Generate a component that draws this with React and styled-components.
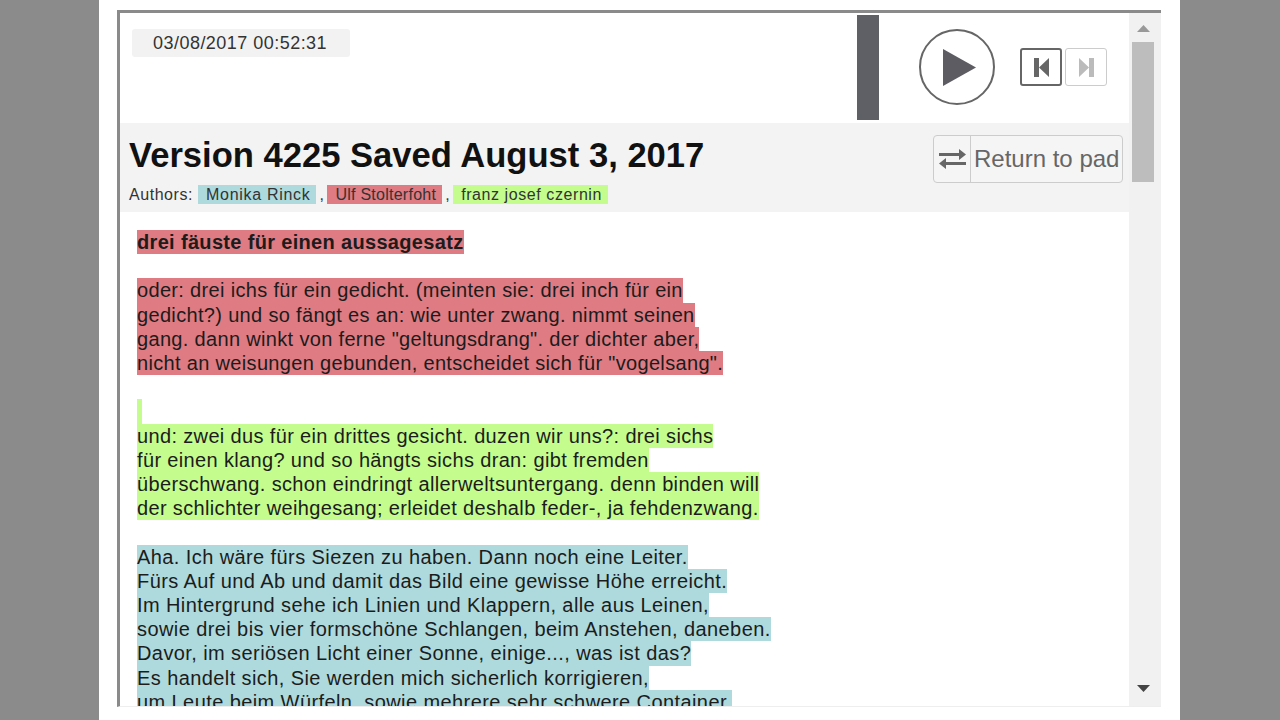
import { Fragment } from 'react';
import styled, { createGlobalStyle } from 'styled-components';

const colors = {
  teal: '#aedadd',
  red: '#de7b83',
  green: '#c4fd8e',
};

const authors = [
  { name: 'Monika Rinck', color: 'teal', spacing: 0.7 },
  { name: 'Ulf Stolterfoht', color: 'red', spacing: 0.25 },
  { name: 'franz josef czernin', color: 'green', spacing: 0.58 },
];

const paragraphs = [
  { color: 'red', bold: true, spacing: 0.33, lines: ['drei fäuste für einen aussagesatz'] },
  null,
  {
    color: 'red',
    spacing: 0.33,
    lines: [
      'oder: drei ichs für ein gedicht. (meinten sie: drei inch für ein',
      'gedicht?) und so fängt es an: wie unter zwang. nimmt seinen',
      'gang. dann winkt von ferne "geltungsdrang". der dichter aber,',
      'nicht an weisungen gebunden, entscheidet sich für "vogelsang".',
    ],
  },
  null,
  {
    color: 'green',
    spacing: 0.35,
    lines: [
      '',
      'und: zwei dus für ein drittes gesicht. duzen wir uns?: drei sichs',
      'für einen klang? und so hängts sichs dran: gibt fremden',
      'überschwang. schon eindringt allerweltsuntergang. denn binden will',
      'der schlichter weihgesang; erleidet deshalb feder-, ja fehdenzwang.',
    ],
  },
  null,
  {
    color: 'teal',
    spacing: 0.41,
    lines: [
      'Aha. Ich wäre fürs Siezen zu haben. Dann noch eine Leiter.',
      'Fürs Auf und Ab und damit das Bild eine gewisse Höhe erreicht.',
      'Im Hintergrund sehe ich Linien und Klappern, alle aus Leinen,',
      'sowie drei bis vier formschöne Schlangen, beim Anstehen, daneben.',
      'Davor, im seriösen Licht einer Sonne, einige..., was ist das?',
      'Es handelt sich, Sie werden mich sicherlich korrigieren,',
      'um Leute beim Würfeln, sowie mehrere sehr schwere Container.',
    ],
  },
];

const GlobalStyle = createGlobalStyle`
  html, body {
    margin: 0;
    height: 720px;
    overflow: hidden;
    background: #8b8b8b;
    font-family: "Liberation Sans", Arial, sans-serif;
  }
`;

const Page = styled.div`
  width: 1081px;
  height: 720px;
  margin-left: 99px;
  padding: 10px 19px 13px 18px;
  box-sizing: border-box;
  background: #fff;
`;

const Frame = styled.div`
  height: 100%;
  display: grid;
  grid-template-columns: 1fr 32px;
  box-sizing: border-box;
  border-top: 3px solid #8a8a8a;
  border-left: 3px solid #8a8a8a;
  border-bottom: 1px solid #eee;
  overflow: hidden;
`;

const Main = styled.div`
  display: flex;
  flex-direction: column;
  min-width: 0;
  overflow: hidden;
`;

const Toolbar = styled.div`
  height: 110px;
  flex: none;
  display: flex;
  align-items: flex-start;
  box-sizing: border-box;
  padding-left: 12px;
`;

const DateBox = styled.div`
  width: 218px;
  height: 28px;
  margin-top: 16px;
  padding-left: 21px;
  box-sizing: border-box;
  background: #f2f2f2;
  border-radius: 3px;
  color: #333;
  font-size: 18px;
  letter-spacing: 0.47px;
  line-height: 28px;
`;

const Timeline = styled.div`
  width: 22px;
  height: 105px;
  margin: 2px 0 0 507px;
  background: #5f5f66;
`;

const PlayButton = styled.div`
  width: 76px;
  height: 76px;
  margin: 16px 0 0 40px;
  box-sizing: border-box;
  border: 2px solid #666;
  border-radius: 50%;
  display: flex;
  align-items: center;
  justify-content: center;
  padding-left: 4px;
`;

const StepGroup = styled.div`
  display: flex;
  gap: 3px;
  margin: 35px 0 0 25px;
`;

const StepButton = styled.div`
  width: 42px;
  height: 38px;
  box-sizing: border-box;
  border: ${({ $active }) => ($active ? '2px solid #666' : '1.5px solid #ccc')};
  border-radius: 3px;
  display: flex;
  align-items: center;
  justify-content: center;
`;

const Header = styled.div`
  height: 89px;
  flex: none;
  display: flex;
  justify-content: space-between;
  box-sizing: border-box;
  padding: 12px 6px 0 9px;
  background: #f3f3f3;
`;

const Title = styled.h1`
  margin: 0;
  color: #111;
  font-size: 34.6px;
  font-weight: 700;
  line-height: 40px;
`;

const Authors = styled.div`
  display: flex;
  align-items: center;
  gap: 0;
  margin-top: 9px;
  height: 21px;
  color: #333;
  font-size: 16px;
  letter-spacing: 0.55px;
`;

const AuthorsLabel = styled.span`
  margin-right: 5px;
`;

const AuthorChip = styled.span`
  padding: 0 6px 0 8px;
  line-height: 19px;
  background: ${({ $color }) => colors[$color]};
  color: #333;
  letter-spacing: ${({ $spacing }) => $spacing}px;
`;

const Comma = styled.span`
  width: 11px;
  padding-left: 3px;
  box-sizing: border-box;
`;

const ReturnButton = styled.div`
  width: 190px;
  height: 48px;
  display: flex;
  box-sizing: border-box;
  border: 1px solid #ccc;
  border-radius: 4px;
  background: #f5f5f5;
  color: #666;
  font-size: 24px;
  line-height: 46px;
  white-space: nowrap;
`;

const ReturnIcon = styled.span`
  width: 36px;
  flex: none;
  display: flex;
  align-items: center;
  justify-content: center;
  border-right: 1px solid #ccc;
  margin-right: 3px;
`;

const Content = styled.div`
  flex: 1;
  min-height: 0;
  overflow: hidden;
  padding: 18px 0 0 17px;
  background: #fff;
  color: #1c1c1c;
  font-size: 20px;
  line-height: 24.2px;
`;

const Blank = styled.div`
  height: 24.2px;
`;

const Line = styled.div`
  width: fit-content;
  min-width: 5px;
  min-height: 24.2px;
  white-space: pre;
  font-weight: ${({ $bold }) => ($bold ? 700 : 400)};
  letter-spacing: ${({ $spacing }) => $spacing}px;
  background: ${({ $color }) => colors[$color]};
`;

const Scrollbar = styled.div`
  display: flex;
  flex-direction: column;
  align-items: center;
  background: #f1f1f1;
  padding-right: 4px;
`;

const Arrow = styled.svg`
  flex: none;
  margin-top: ${({ $down }) => ($down ? '503px' : '12px')};
`;

const Thumb = styled.div`
  flex: none;
  width: 22px;
  height: 140px;
  margin-top: 10px;
  background: #bdbdbd;
`;

function Poem() {
  return paragraphs.map((paragraph, index) =>
    paragraph ? (
      paragraph.lines.map((line, lineIndex) => (
        <Line
          key={`${index}-${lineIndex}`}
          $color={paragraph.color}
          $bold={paragraph.bold}
          $spacing={paragraph.spacing}
        >
          {line}
        </Line>
      ))
    ) : (
      <Blank key={index} />
    ),
  );
}

export default function App() {
  return (
    <>
      <GlobalStyle />
      <Page>
        <Frame>
          <Main>
            <Toolbar>
              <DateBox>03/08/2017 00:52:31</DateBox>
              <Timeline />
              <PlayButton>
                <svg width="33" height="37" viewBox="0 0 33 37">
                  <path d="M0 0 L33 18.5 L0 37 Z" fill="#5c5c62" />
                </svg>
              </PlayButton>
              <StepGroup>
                <StepButton $active>
                  <svg width="15" height="19" viewBox="0 0 15 19">
                    <path d="M0 0h5v19H0z M15 0v19L5 9.5z" fill="#666" />
                  </svg>
                </StepButton>
                <StepButton>
                  <svg width="15" height="19" viewBox="0 0 15 19">
                    <path d="M10 0h5v19h-5z M0 0v19L10 9.5z" fill="#bbb" />
                  </svg>
                </StepButton>
              </StepGroup>
            </Toolbar>
            <Header>
              <div>
                <Title>Version 4225 Saved August 3, 2017</Title>
                <Authors>
                  <AuthorsLabel>Authors:</AuthorsLabel>
                  {authors.map((author, index) => (
                    <Fragment key={author.name}>
                      <AuthorChip $color={author.color} $spacing={author.spacing}>
                        {author.name}
                      </AuthorChip>
                      {index < authors.length - 1 && <Comma>,</Comma>}
                    </Fragment>
                  ))}
                </Authors>
              </div>
              <ReturnButton>
                <ReturnIcon>
                  <svg width="27" height="20" viewBox="0 0 27 20">
                    <path d="M0 4h20V0l7 5.5-7 5.5V7H0z M27 13H7V9l-7 5.5L7 20v-4h20z" fill="#666" />
                  </svg>
                </ReturnIcon>
                Return to pad
              </ReturnButton>
            </Header>
            <Content>
              <Poem />
            </Content>
          </Main>
          <Scrollbar>
            <Arrow width="13" height="7" viewBox="0 0 13 7">
              <path d="M6.5 0L13 7H0z" fill="#999" />
            </Arrow>
            <Thumb />
            <Arrow $down width="13" height="7" viewBox="0 0 13 7">
              <path d="M0 0h13L6.5 7z" fill="#444" />
            </Arrow>
          </Scrollbar>
        </Frame>
      </Page>
    </>
  );
}
